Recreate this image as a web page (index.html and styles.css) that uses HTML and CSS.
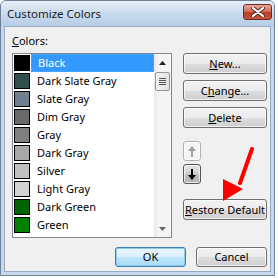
FILE: index.html
```html
<!DOCTYPE html>
<html lang="en">

<head>
  <meta charset="UTF-8" />
  <title>Customize Colors</title>
  <link rel="stylesheet" href="styles.css">
</head>

<body>
  <div class="window">
    <div class="titlebar">
      <span class="title">Customize Colors</span>
      <button class="close" aria-label="Close">
        <svg width="14" height="10" viewBox="0 0 14 10">
          <path d="M2 1 L12 9 M12 1 L2 9" stroke="#5a2a22" stroke-width="4" stroke-linecap="round" />
          <path d="M2 1 L12 9 M12 1 L2 9" stroke="#fff" stroke-width="2.2" stroke-linecap="round" />
        </svg>
      </button>
    </div>

    <div class="client">
      <div class="main">
        <div class="left">
          <label class="lbl"><u>C</u>olors:</label>
          <div class="listbox">
            <ul class="items">
              <li class="item selected"><span class="swatch" style="background:#000000"></span><span class="name">Black</span></li>
              <li class="item"><span class="swatch" style="background:#2f4f4f"></span><span class="name">Dark Slate Gray</span></li>
              <li class="item"><span class="swatch" style="background:#708090"></span><span class="name">Slate Gray</span></li>
              <li class="item"><span class="swatch" style="background:#696969"></span><span class="name">Dim Gray</span></li>
              <li class="item"><span class="swatch" style="background:#808080"></span><span class="name">Gray</span></li>
              <li class="item"><span class="swatch" style="background:#a9a9a9"></span><span class="name">Dark Gray</span></li>
              <li class="item"><span class="swatch" style="background:#c0c0c0"></span><span class="name">Silver</span></li>
              <li class="item"><span class="swatch" style="background:#d3d3d3"></span><span class="name">Light Gray</span></li>
              <li class="item"><span class="swatch" style="background:#006400"></span><span class="name">Dark Green</span></li>
              <li class="item"><span class="swatch" style="background:#008000"></span><span class="name">Green</span></li>
            </ul>
            <div class="scrollbar">
              <div class="sb-arrow">
                <svg width="7" height="4" viewBox="0 0 7 4"><path d="M0 4 L3.5 0 L7 4 Z" fill="#222" /></svg>
              </div>
              <div class="thumb"><span></span><span></span><span></span><span></span></div>
              <div class="track"></div>
              <div class="sb-arrow">
                <svg width="7" height="4" viewBox="0 0 7 4"><path d="M0 0 L3.5 4 L7 0 Z" fill="#666" /></svg>
              </div>
            </div>
          </div>
        </div>

        <div class="side">
          <button class="btn"><u>N</u>ew...</button>
          <button class="btn">C<u>h</u>ange...</button>
          <button class="btn"><u>D</u>elete</button>
          <button class="btn small disabled">
            <svg width="8" height="11" viewBox="0 0 8 11"><path d="M4 0 L8 5 L5 5 L5 11 L3 11 L3 5 L0 5 Z" fill="#9aa0a6" /></svg>
          </button>
          <button class="btn small pressed">
            <svg width="8" height="11" viewBox="0 0 8 11"><path d="M4 11 L8 6 L5 6 L5 0 L3 0 L3 6 L0 6 Z" fill="#000" /></svg>
          </button>
          <button class="btn restore"><u>R</u>estore Default</button>
        </div>
      </div>

      <div class="footer">
        <button class="btn wide default">OK</button>
        <button class="btn wide">Cancel</button>
      </div>
    </div>

    <svg class="annotation" width="40" height="60" viewBox="0 0 40 60">
      <path d="M31 2 L19 36" stroke="#ff0000" stroke-width="4" stroke-linecap="round" />
      <path d="M2 54 L2 32 L22 42 Z" fill="#ff0000" />
    </svg>
  </div>
</body>

</html>
```

FILE: styles.css
```css
body {
  margin: 0;
  background: #fff;
  font-family: 'Noto Sans', 'Open Sans', sans-serif;
  font-size: 11px;
  color: #000;
}

.window {
  position: relative;
  width: 275px;
  height: 276px;
  box-sizing: border-box;
  border: 1px solid #6f8197;
  border-radius: 6px 6px 0 0;
  background: #c6d8ec;
  padding: 0 3px 3px;
  display: flex;
  flex-direction: column;
}

.titlebar {
  height: 25px;
  display: flex;
  align-items: center;
  justify-content: space-between;
  margin: 0 -3px;
  padding: 0 2px 0 6px;
  background: linear-gradient(#e6eef8, #c9dbee 50%, #b7cde6);
  border-radius: 5px 5px 0 0;
}

.title {
  color: #1c1c1c;
  font-size: 11.5px;
}

.close {
  width: 29px;
  height: 16px;
  margin-top: -3px;
  padding: 0;
  border: 1px solid #6e2a22;
  border-radius: 3px;
  background: linear-gradient(#e9a99b, #d0705f 45%, #b93d28 55%, #c65340);
  display: flex;
  align-items: center;
  justify-content: center;
}

.client {
  flex: 1;
  background: #f0f0f0;
  border: 1px solid #97aac1;
  padding: 0 3px 0 7px;
  display: flex;
  flex-direction: column;
}

.main {
  display: flex;
  gap: 11px;
}

.lbl {
  display: block;
  height: 15px;
  margin: 6px 0 5px;
  line-height: 15px;
}

.listbox {
  width: 160px;
  height: 185px;
  box-sizing: border-box;
  border: 1px solid #828790;
  background: #fff;
  display: flex;
}

.items {
  list-style: none;
  margin: 0;
  padding: 0;
  flex: 1;
}

.item {
  height: 18px;
  display: flex;
  align-items: center;
}

.swatch {
  width: 14px;
  height: 14px;
  margin: 0 1px 0 1px;
  border: 1px solid #000;
}

.name {
  flex: 1;
  height: 18px;
  line-height: 17px;
  padding-left: 6px;
  box-sizing: border-box;
  white-space: nowrap;
}

.selected .name {
  background: #3399ff;
  color: #fff;
  border: 1px dotted #f08a24;
  line-height: 15px;
}

.scrollbar {
  width: 17px;
  display: flex;
  flex-direction: column;
  background: linear-gradient(90deg, #e8e8e8, #f5f5f5 30%, #f5f5f5);
}

.sb-arrow {
  height: 17px;
  display: flex;
  align-items: center;
  justify-content: center;
}

.thumb {
  height: 17px;
  margin: 1px 1px 0;
  border: 1px solid #979797;
  border-radius: 2px;
  background: linear-gradient(90deg, #f2f2f2, #e2e2e2);
  display: flex;
  flex-direction: column;
  justify-content: center;
  gap: 1px;
  align-items: center;
}

.thumb span {
  width: 7px;
  height: 1px;
  background: #555;
}

.track {
  flex: 1;
}

.side {
  display: flex;
  flex-direction: column;
  align-items: flex-start;
  padding-top: 26px;
}

.btn {
  font-family: inherit;
  font-size: 11px;
  color: #000;
  width: 84px;
  height: 21px;
  padding: 0;
  margin-bottom: 6px;
  border: 1px solid #707070;
  border-radius: 3px;
  background: linear-gradient(#f2f2f2, #ebebeb 50%, #dddddd 51%, #cfcfcf);
  box-shadow: inset 0 0 0 1px rgba(255, 255, 255, 0.7);
  line-height: 18px;
  white-space: nowrap;
}

.btn.small {
  width: 18px;
  height: 20px;
  margin: 7px 0 0;
  display: flex;
  align-items: center;
  justify-content: center;
}

.btn.small + .btn.small {
  margin-top: 3px;
}

.btn.disabled {
  border-color: #adb2b5;
  background: #f4f4f4;
}

.btn.pressed {
  border-color: #555;
  background: linear-gradient(#e5e5e5, #d0d0d0 50%, #bdbdbd 51%, #b5b5b5);
}

.btn.restore {
  margin-top: 15px;
}

.footer {
  display: flex;
  justify-content: flex-end;
  gap: 10px;
  margin-top: 9px;
}

.btn.wide {
  width: 71px;
  height: 20px;
  margin: 0;
}

.btn.default {
  border-color: #3c7fb1;
  background: linear-gradient(#eaf6fd, #d9f0fc 50%, #bee6fd 51%, #a7d9f5);
  box-shadow: inset 0 0 0 1px #8ecbe9;
}

.annotation {
  position: absolute;
  left: 220px;
  top: 146px;
}
```
